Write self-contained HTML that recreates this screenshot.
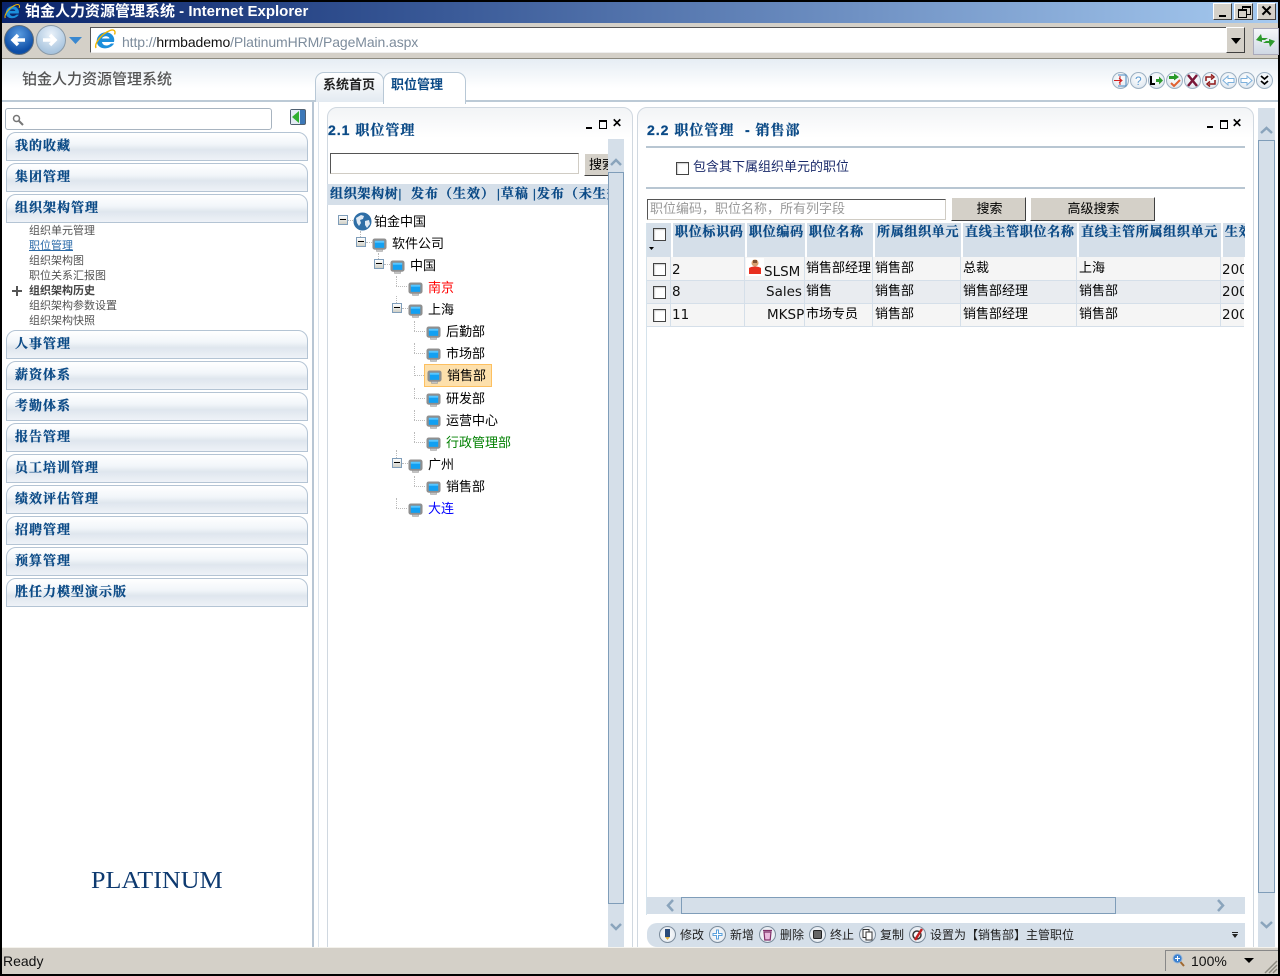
<!DOCTYPE html>
<html lang="zh"><head><meta charset="utf-8"><title>铂金人力资源管理系统</title>
<style>
html,body{margin:0;padding:0;background:#000;width:1280px;height:976px;overflow:hidden}
#w{position:relative;width:1280px;height:976px;overflow:hidden;background:#000;font-family:"Liberation Sans","Noto Sans CJK SC",sans-serif;font-size:13px;color:#000}
#w div,#w span.t,#w svg.a{position:absolute}
.t{white-space:nowrap;line-height:14px;height:14px}
.h{font-family:"Liberation Serif","Noto Serif CJK SC",serif;font-weight:700;color:#0b4a86;font-size:13px;letter-spacing:1px;-webkit-text-stroke:.3px #0b4a86}
.p{font-family:"Liberation Sans","Noto Serif CJK SC",serif;font-size:14px;letter-spacing:1px;line-height:16px;height:16px}
.m{left:15px;font-family:"Liberation Serif","Noto Serif CJK SC",serif;font-weight:700;color:#0b4a86;font-size:13px;letter-spacing:1px;-webkit-text-stroke:.3px #0b4a86}
.b{left:6px;width:300px;height:27px;border:1px solid #b4c4d4;border-top-left-radius:10px;border-top-right-radius:10px;background:linear-gradient(#fff 0,#f2f6fa 40%,#dfe6ee 62%,#eef2f7 100%)}
.s{left:29px;font-size:11px;color:#555;line-height:12px;height:12px}
.btn{background:#d4d0c8;border:1px solid;border-color:#fff #404040 #404040 #fff;text-align:center;font-size:13px;line-height:22px;box-sizing:border-box}
.th{background:#d5dfe9;border-left:2px solid #fff;box-sizing:border-box;top:223px;height:34px}
.cb{background:#fff;border:1px solid #444;width:11px;height:11px;box-shadow:inset 1px 1px 1px #ccc}
.c{width:15px;height:15px;border-radius:50%;border:1px solid #9cb0c2;background:radial-gradient(circle at 50% 35%,#fff,#e4ebf2 70%,#c8d4e0);top:72px}
.c svg{position:absolute;left:0;top:0}
.tb{width:15px;height:15px;border-radius:50%;border:1px solid #7c8c9c;background:radial-gradient(circle,#fff,#e6ebf1 75%,#bcc8d4);top:926px}
.tb svg{position:absolute;left:0;top:0}
.dot{border-left:1px dotted #bbb;width:0}
.dh{border-top:1px dotted #bbb;height:0}
.ex{width:8px;height:8px;border:1px solid #7f9db9;background:linear-gradient(#fff,#cfcfc6)}
.ex::after{content:"";position:absolute;left:1px;top:3px;width:6px;height:1px;background:#000}
.l{font-size:13px}
.v{font-family:"DejaVu Sans",sans-serif;font-size:13.500px;color:#111}
.f{font-size:12px;color:#222}
</style></head><body><div id="w">
<svg width="0" height="0" style="position:absolute"><defs>
<symbol id="pc" viewBox="0 0 16 16"><path d="M3 .5h10a2.500 2.500 0 0 1 2.500 2.500v7a2.500 2.500 0 0 1-2.500 2.500h-1.500v2h-7v-2H3A2.500 2.500 0 0 1 .5 10V3A2.500 2.500 0 0 1 3 .5z" fill="#8f8f8f"/><rect x="3" y="3" width="10" height="7.500" fill="#12a0f2"/><rect x="3" y="3" width="10" height="2" fill="#58c6ff"/><rect x="5" y="12.500" width="6" height="1.500" fill="#c4c4c4"/></symbol>
<symbol id="ie" viewBox="0 0 24 24"><path d="M21 14H9c.3 3.500 5.500 5 9 1.500h3C18 21.500 6 22.500 4 15 2.500 8 9 3 15 4.500 20 6 22 10 21 14zM9 10.500h7.500c-.5-3-6.500-3-7.500 0z" fill="#1c8fdc"/><path d="M3 20C1 16 8 6 17 2.500c4-1.500 6 .5 4.500 4" fill="none" stroke="#f0b400" stroke-width="1.400"/></symbol>
</defs></svg>

<!-- title bar -->
<div style="left:2px;top:2px;width:1276px;height:21px;background:linear-gradient(90deg,#0a246a 0,#3a5a98 35%,#a6caf0 100%)"></div>
<svg class="a" style="left:3px;top:2px" width="18" height="20"><use href="#ie" width="18" height="20"/></svg>
<span class="t" style="left:25px;top:4px;color:#fff;font-weight:700;font-size:15px;line-height:16px;height:16px">铂金人力资源管理系统 - Internet Explorer</span>
<div class="btn" style="left:1213px;top:3px;width:19px;height:17px"><div style="left:5px;top:11px;width:7px;height:2px;background:#000"></div></div>
<div class="btn" style="left:1234px;top:3px;width:19px;height:17px"><div style="left:7px;top:2px;width:7px;height:6px;border:1px solid #000;border-top-width:2px"></div><div style="left:3px;top:5px;width:7px;height:6px;border:1px solid #000;border-top-width:2px;background:#d4d0c8"></div></div>
<div class="btn" style="left:1257px;top:3px;width:19px;height:17px;font-weight:700;line-height:15px;font-size:15px">✕</div>

<!-- toolbar -->
<div style="left:2px;top:23px;width:1276px;height:36px;background:#d4d0c8"></div>
<div style="left:2px;top:58px;width:1276px;height:1px;background:#8c8a80"></div>
<div style="left:4px;top:25px;width:28px;height:28px;border-radius:50%;background:radial-gradient(circle at 50% 30%,#5a9ce0,#0e4ea6 70%);border:1px solid #5b6b7b"></div>
<svg class="a" style="left:8px;top:30px" width="20" height="20"><path d="M17 10H6M10 5l-5 5 5 5" stroke="#fff" stroke-width="3.500" fill="none"/></svg>
<div style="left:36px;top:25px;width:28px;height:28px;border-radius:50%;background:radial-gradient(circle at 50% 30%,#eaf2fa,#a8c4de 75%);border:1px solid #8a9aa8"></div>
<svg class="a" style="left:40px;top:30px" width="20" height="20"><path d="M3 10h11M10 5l5 5-5 5" stroke="#fff" stroke-width="3.500" fill="none"/></svg>
<svg class="a" style="left:69px;top:37px" width="13" height="7"><path d="M0 0h13L6.500 7z" fill="#3a88d0"/></svg>
<div style="left:90px;top:27px;width:1154px;height:26px;background:#fff;border:1px solid;border-color:#555 #eee #eee #555;box-sizing:border-box"></div>
<svg class="a" style="left:93px;top:28px" width="24" height="24"><use href="#ie" width="24" height="24"/></svg>
<span class="t" style="left:122px;top:35px;color:#7d8c9c;font-size:14px;line-height:15px;height:15px;letter-spacing:-.1px">http://<span style="color:#111">hrmbademo</span>/PlatinumHRM/PageMain.aspx</span>
<div class="btn" style="left:1226px;top:27px;width:19px;height:26px"></div>
<svg class="a" style="left:1231px;top:38px" width="10" height="6"><path d="M0 0h10L5 6z"/></svg>
<div style="left:1253px;top:28px;width:24px;height:25px;background:linear-gradient(#f5f7fa,#cfd8e4);border:1px solid #aab"></div>
<svg class="a" style="left:1255px;top:32px" width="21" height="17"><path d="M1 8l5-6 1 4h6l-3 2H7v2zM20 9l-5 6-1-4H8l3-2h3V7z" fill="#2e9a2e"/></svg>

<!-- page -->
<div style="left:2px;top:59px;width:1276px;height:888px;background:#fff"></div>
<div style="left:2px;top:59px;width:1276px;height:42px;background:linear-gradient(#e6edf4,#fff 70%)"></div>
<div style="left:2px;top:100px;width:1276px;height:2px;background:#bccad6"></div>
<span class="t" style="left:22px;top:72px;font-size:15px;color:#555;line-height:16px;height:16px;font-weight:500">铂金人力资源管理系统</span>

<div style="left:315px;top:72px;width:67px;height:29px;border:1px solid #b8c8d6;border-bottom:0;border-radius:9px 9px 0 0;background:linear-gradient(#fff,#e3eaf1)"></div>
<span class="t" style="left:323px;top:78px;font-weight:700;color:#222">系统首页</span>
<div style="left:383px;top:72px;width:81px;height:31px;border:1px solid #b8c8d6;border-bottom:0;border-radius:9px 9px 0 0;background:#fff"></div>
<span class="t" style="left:391px;top:78px;color:#0b4a86;font-weight:700">职位管理</span>

<!-- top-right round buttons -->
<div class="c" style="left:1112px"><svg width="15" height="15"><path d="M5 2h8v11H5" fill="none" stroke="#4a88c0"/><path d="M1 7.500h7M6 5l3 2.500-3 2.500M7 3v9" stroke="#d02020" fill="none"/></svg></div>
<div class="c" style="left:1130px"><svg width="15" height="15"><text x="4" y="12" font-size="12" fill="#5c9ad0" font-family="Liberation Sans">?</text></svg></div>
<div class="c" style="left:1148px"><svg width="15" height="15"><path d="M2 3v8h4" stroke="#000" stroke-width="2" fill="none"/><path d="M7 6h3V3.500L14 7.500 10 11.500V9H7z" fill="#2e9a2e"/></svg></div>
<div class="c" style="left:1166px"><svg width="15" height="15"><path d="M2 3h5V0.500L12 4 7 7.500V6H2z" fill="#2a9a2a"/><path d="M4 10l3 3 6-6" stroke="#e06030" stroke-width="2" fill="none"/></svg></div>
<div class="c" style="left:1184px"><svg width="15" height="15"><path d="M3 2l9 11M12 2L3 13" stroke="#7a1838" stroke-width="2.500"/></svg></div>
<div class="c" style="left:1202px"><svg width="15" height="15"><path d="M3 8V4h6M8 1.500 11 4 8 6.500M12 7v4H6M7 8.500 4 11l3 2.500" stroke="#901818" stroke-width="1.500" fill="none"/></svg></div>
<div class="c" style="left:1220px"><svg width="15" height="15"><path d="M2 7.500 7 3v2.500h6v4H7V12z" fill="#fff" stroke="#7cb0dc"/></svg></div>
<div class="c" style="left:1238px"><svg width="15" height="15"><path d="M13 7.500 8 3v2.500H2v4h6V12z" fill="#fff" stroke="#7cb0dc"/></svg></div>
<div class="c" style="left:1256px"><svg width="15" height="15"><path d="M4 3l3.500 3L11 3M4 8l3.500 3L11 8" stroke="#000" stroke-width="1.800" fill="none"/></svg></div>

<!-- sidebar -->
<div style="left:5px;top:108px;width:265px;height:20px;border:1px solid #a8b4c0;border-radius:3px;background:#fff"></div>
<svg class="a" style="left:12px;top:114px" width="12" height="12"><circle cx="4.500" cy="4.500" r="3" fill="none" stroke="#777" stroke-width="1.500"/><path d="M7 7l4 4" stroke="#777" stroke-width="2"/></svg>
<div style="left:290px;top:109px;width:14px;height:14px;border:1px solid #506070;border-radius:2px;background:#3c78b8"></div>
<svg class="a" style="left:291px;top:110px" width="9" height="14"><rect width="9" height="14" fill="#e4ecf4"/><path d="M1 7l7-6v12z" fill="#30b030"/></svg>
<div style="left:312px;top:102px;width:2px;height:845px;background:#b8c6d4"></div>
<div style="left:318px;top:102px;width:1px;height:845px;background:#dce4ec"></div>

<div class="b" style="top:132px"></div><span class="t m" style="top:139px">我的收藏</span>
<div class="b" style="top:163px"></div><span class="t m" style="top:170px">集团管理</span>
<div class="b" style="top:194px"></div><span class="t m" style="top:201px">组织架构管理</span>
<span class="t s" style="top:225px">组织单元管理</span>
<span class="t s" style="top:240px;color:#2a6aa8;text-decoration:underline">职位管理</span>
<span class="t s" style="top:255px">组织架构图</span>
<span class="t s" style="top:270px">职位关系汇报图</span>
<span class="t s" style="top:285px;font-weight:700;color:#444">组织架构历史</span>
<span class="t s" style="top:300px">组织架构参数设置</span>
<span class="t s" style="top:315px">组织架构快照</span>
<div style="left:12px;top:290px;width:10px;height:2px;background:#555"></div>
<div style="left:16px;top:286px;width:2px;height:10px;background:#555"></div>
<div class="b" style="top:330px"></div><span class="t m" style="top:337px">人事管理</span>
<div class="b" style="top:361px"></div><span class="t m" style="top:368px">薪资体系</span>
<div class="b" style="top:392px"></div><span class="t m" style="top:399px">考勤体系</span>
<div class="b" style="top:423px"></div><span class="t m" style="top:430px">报告管理</span>
<div class="b" style="top:454px"></div><span class="t m" style="top:461px">员工培训管理</span>
<div class="b" style="top:485px"></div><span class="t m" style="top:492px">绩效评估管理</span>
<div class="b" style="top:516px"></div><span class="t m" style="top:523px">招聘管理</span>
<div class="b" style="top:547px"></div><span class="t m" style="top:554px">预算管理</span>
<div class="b" style="top:578px"></div><span class="t m" style="top:585px">胜任力模型演示版</span>
<span class="t" style="left:91px;top:868px;font-family:'Liberation Serif',serif;font-size:24px;line-height:26px;height:26px;color:#0e3a70;transform:scaleX(1.085);transform-origin:left">PLATINUM</span>

<!-- middle panel -->
<div style="left:327px;top:107px;width:304px;height:850px;border:1px solid #d0d8e0;border-radius:10px 10px 0 0;background:linear-gradient(#f2f4f6,#fff 30px)"></div>
<span class="t h p" style="left:328px;top:122px">2.1 职位管理</span>
<div style="left:586px;top:127px;width:6px;height:2px;background:#000"></div>
<div style="left:599px;top:120px;width:6px;height:6px;border:1px solid #000;border-top-width:2px"></div>
<span class="t" style="left:612px;top:116px;font-weight:700;font-size:12px">✕</span>
<div style="left:330px;top:153px;width:249px;height:21px;box-sizing:border-box;background:#fff;border:1px solid;border-color:#555 #d0ccc4 #d0ccc4 #555"></div>
<div class="btn" style="left:584px;top:153px;width:40px;height:23px;text-align:left;padding-left:4px;overflow:hidden">搜索</div>
<div style="left:327px;top:184px;width:281px;height:21px;background:#d5dfe9"></div>
<span class="t h" style="left:330px;top:187px;letter-spacing:.7px">组织架构树|</span>
<span class="t h" style="left:411px;top:187px">发布（生效）</span>
<span class="t h" style="left:497px;top:187px">|草稿</span>
<span class="t h" style="left:533px;top:187px;width:75px;overflow:hidden">|发布（未生效）</span>

<div style="left:608px;top:139px;width:16px;height:808px;background:#d5dfe9"></div>
<div style="left:608px;top:172px;width:14px;height:730px;border:1px solid #7f9db9;background:#d5dfe9"></div>
<svg class="a" style="left:610px;top:158px" width="12" height="8"><path d="M1 7l5-5 5 5" fill="none" stroke="#8aa4bc" stroke-width="2.500"/></svg>
<svg class="a" style="left:610px;top:923px" width="12" height="8"><path d="M1 1l5 5 5-5" fill="none" stroke="#8aa4bc" stroke-width="2.500"/></svg>

<!-- tree lines -->
<div class="dot" style="left:360px;top:231px;height:6px"></div>
<div class="dot" style="left:378px;top:253px;height:6px"></div>
<div class="dot" style="left:396px;top:276px;height:10px"></div>
<div class="dot" style="left:396px;top:296px;height:7px"></div>
<div class="dot" style="left:396px;top:450px;height:8px"></div>
<div class="dot" style="left:396px;top:498px;height:10px"></div>
<div class="dot" style="left:414px;top:321px;height:10px"></div>
<div class="dot" style="left:414px;top:343px;height:10px"></div>
<div class="dot" style="left:414px;top:366px;height:10px"></div>
<div class="dot" style="left:414px;top:388px;height:10px"></div>
<div class="dot" style="left:414px;top:410px;height:10px"></div>
<div class="dot" style="left:414px;top:432px;height:10px"></div>
<div class="dot" style="left:414px;top:476px;height:10px"></div>
<div class="dh" style="left:348px;top:220px;width:5px"></div>
<div class="dh" style="left:366px;top:242px;width:6px"></div>
<div class="dh" style="left:384px;top:264px;width:6px"></div>
<div class="dh" style="left:402px;top:308px;width:6px"></div>
<div class="dh" style="left:402px;top:463px;width:6px"></div>
<div class="dh" style="left:396px;top:286px;width:11px"></div>
<div class="dh" style="left:414px;top:331px;width:11px"></div>
<div class="dh" style="left:414px;top:353px;width:11px"></div>
<div class="dh" style="left:414px;top:375px;width:10px"></div>
<div class="dh" style="left:414px;top:398px;width:11px"></div>
<div class="dh" style="left:414px;top:420px;width:11px"></div>
<div class="dh" style="left:414px;top:442px;width:11px"></div>
<div class="dh" style="left:414px;top:486px;width:11px"></div>
<div class="dh" style="left:396px;top:508px;width:11px"></div>
<div class="ex" style="left:338px;top:215px"></div>
<div class="ex" style="left:356px;top:237px"></div>
<div class="ex" style="left:374px;top:259px"></div>
<div class="ex" style="left:392px;top:303px"></div>
<div class="ex" style="left:392px;top:458px"></div>

<svg class="a" style="left:353px;top:212px" width="19" height="19"><circle cx="9.500" cy="9.500" r="9" fill="#2e6ea6"/><path d="M3 6l5-3 3 1-1 3-3 1 1 3-2 3-2-3zM12 9l4-1 1 4-3 4-2-3z" fill="#dfe9f3"/></svg>
<svg class="a" style="left:372px;top:238px" width="15" height="15"><use href="#pc"/></svg>
<svg class="a" style="left:390px;top:260px" width="15" height="15"><use href="#pc"/></svg>
<svg class="a" style="left:408px;top:282px" width="15" height="15"><use href="#pc"/></svg>
<svg class="a" style="left:408px;top:304px" width="15" height="15"><use href="#pc"/></svg>
<svg class="a" style="left:426px;top:326px" width="15" height="15"><use href="#pc"/></svg>
<svg class="a" style="left:426px;top:348px" width="15" height="15"><use href="#pc"/></svg>
<div style="left:424px;top:364px;width:66px;height:21px;background:#fde0ac;border:1px solid #fdc060"></div>
<svg class="a" style="left:427px;top:370px" width="15" height="15"><use href="#pc"/></svg>
<svg class="a" style="left:426px;top:393px" width="15" height="15"><use href="#pc"/></svg>
<svg class="a" style="left:426px;top:415px" width="15" height="15"><use href="#pc"/></svg>
<svg class="a" style="left:426px;top:437px" width="15" height="15"><use href="#pc"/></svg>
<svg class="a" style="left:408px;top:459px" width="15" height="15"><use href="#pc"/></svg>
<svg class="a" style="left:426px;top:481px" width="15" height="15"><use href="#pc"/></svg>
<svg class="a" style="left:408px;top:503px" width="15" height="15"><use href="#pc"/></svg>

<span class="t l" style="left:374px;top:215px">铂金中国</span>
<span class="t l" style="left:392px;top:237px">软件公司</span>
<span class="t l" style="left:410px;top:259px">中国</span>
<span class="t l" style="left:428px;top:281px;color:#f00">南京</span>
<span class="t l" style="left:428px;top:303px">上海</span>
<span class="t l" style="left:446px;top:325px">后勤部</span>
<span class="t l" style="left:446px;top:347px">市场部</span>
<span class="t l" style="left:447px;top:369px">销售部</span>
<span class="t l" style="left:446px;top:392px">研发部</span>
<span class="t l" style="left:446px;top:414px">运营中心</span>
<span class="t l" style="left:446px;top:436px;color:#008000">行政管理部</span>
<span class="t l" style="left:428px;top:458px">广州</span>
<span class="t l" style="left:446px;top:480px">销售部</span>
<span class="t l" style="left:428px;top:502px;color:#00f">大连</span>

<!-- right panel -->
<div style="left:637px;top:107px;width:615px;height:850px;border:1px solid #d0d8e0;border-radius:10px 10px 0 0;background:linear-gradient(#f2f4f6,#fff 30px)"></div>
<span class="t h p" style="left:647px;top:122px">2.2 职位管理</span>
<span class="t h p" style="left:745px;top:122px">- 销售部</span>
<div style="left:1207px;top:126px;width:6px;height:2px;background:#000"></div>
<div style="left:1220px;top:120px;width:6px;height:6px;border:1px solid #000;border-top-width:2px"></div>
<span class="t" style="left:1232px;top:116px;font-weight:700;font-size:12px">✕</span>
<div style="left:646px;top:146px;width:599px;height:2px;background:#b8c6d2"></div>
<div class="cb" style="left:676px;top:162px"></div>
<span class="t" style="left:693px;top:160px;color:#1a2a6a">包含其下属组织单元的职位</span>
<div style="left:646px;top:187px;width:599px;height:2px;background:#b8c6d2"></div>
<div style="left:647px;top:199px;width:299px;height:21px;box-sizing:border-box;background:#fff;border:1px solid;border-color:#555 #d0ccc4 #d0ccc4 #555"></div>
<span class="t" style="left:650px;top:202px;color:#999">职位编码，职位名称，所有列字段</span>
<div class="btn" style="left:951px;top:197px;width:75px;height:24px;padding-left:2px">搜索</div>
<div class="btn" style="left:1030px;top:197px;width:125px;height:24px;padding-left:2px">高级搜索</div>

<div style="left:647px;top:223px;width:598px;height:34px;background:#d5dfe9"></div>
<div class="th" style="left:671px;width:74px"></div>
<div class="th" style="left:745px;width:60px"></div>
<div class="th" style="left:805px;width:68px"></div>
<div class="th" style="left:873px;width:88px"></div>
<div class="th" style="left:961px;width:116px"></div>
<div class="th" style="left:1077px;width:144px"></div>
<div class="th" style="left:1221px;width:24px"></div>
<div class="cb" style="left:653px;top:228px"></div>
<svg class="a" style="left:649px;top:247px" width="5" height="3"><path d="M0 0h5L2.500 3z"/></svg>
<span class="t h" style="left:675px;top:225px;letter-spacing:.7px">职位标识码</span>
<span class="t h" style="left:749px;top:225px;letter-spacing:.7px">职位编码</span>
<span class="t h" style="left:809px;top:225px;letter-spacing:.7px">职位名称</span>
<span class="t h" style="left:877px;top:225px;letter-spacing:.7px">所属组织单元</span>
<span class="t h" style="left:965px;top:225px;letter-spacing:.7px">直线主管职位名称</span>
<span class="t h" style="left:1081px;top:225px;letter-spacing:.7px">直线主管所属组织单元</span>
<span class="t h" style="left:1225px;top:225px;width:20px;overflow:hidden;letter-spacing:.7px">生效日期</span>

<div style="left:647px;top:257px;width:597px;height:23px;background:#f5f5f5"></div>
<div style="left:647px;top:280px;width:597px;height:1px;background:#d5dfe9"></div>
<div style="left:647px;top:281px;width:597px;height:22px;background:#e9ecf0"></div>
<div style="left:647px;top:303px;width:597px;height:1px;background:#d5dfe9"></div>
<div style="left:647px;top:304px;width:597px;height:22px;background:#f5f5f5"></div>
<div style="left:647px;top:326px;width:597px;height:1px;background:#d5dfe9"></div>
<div style="left:670px;top:257px;width:1px;height:70px;background:#d5dfe9"></div>
<div style="left:744px;top:257px;width:1px;height:70px;background:#d5dfe9"></div>
<div style="left:804px;top:257px;width:1px;height:70px;background:#d5dfe9"></div>
<div style="left:872px;top:257px;width:1px;height:70px;background:#d5dfe9"></div>
<div style="left:960px;top:257px;width:1px;height:70px;background:#d5dfe9"></div>
<div style="left:1076px;top:257px;width:1px;height:70px;background:#d5dfe9"></div>
<div style="left:1220px;top:257px;width:1px;height:70px;background:#d5dfe9"></div>
<div style="left:646px;top:223px;width:1px;height:692px;background:#d5e3ec"></div>

<div class="cb" style="left:653px;top:263px"></div>
<div class="cb" style="left:653px;top:286px"></div>
<div class="cb" style="left:653px;top:309px"></div>
<span class="t v" style="left:672px;top:263px">2</span>
<span class="t v" style="left:672px;top:285px">8</span>
<span class="t v" style="left:672px;top:308px">11</span>
<div style="left:746px;top:258px;width:18px;height:18px;background:#fff"></div>
<svg class="a" style="left:747px;top:258px" width="16" height="18"><circle cx="8" cy="5" r="3.500" fill="#d8a070"/><path d="M6 2h4v3H6z" fill="#805030"/><path d="M2 10c3-2 9-2 12 0v6H2z" fill="#e83020"/></svg>
<span class="t v" style="left:764px;top:265px">SLSM</span>
<span class="t v" style="left:766px;top:285px">Sales</span>
<span class="t v" style="left:767px;top:308px">MKSP</span>
<span class="t" style="left:806px;top:261px">销售部经理</span>
<span class="t" style="left:806px;top:284px">销售</span>
<span class="t" style="left:806px;top:307px">市场专员</span>
<span class="t" style="left:875px;top:261px">销售部</span>
<span class="t" style="left:875px;top:284px">销售部</span>
<span class="t" style="left:875px;top:307px">销售部</span>
<span class="t" style="left:963px;top:261px">总裁</span>
<span class="t" style="left:963px;top:284px">销售部经理</span>
<span class="t" style="left:963px;top:307px">销售部经理</span>
<span class="t" style="left:1079px;top:261px">上海</span>
<span class="t" style="left:1079px;top:284px">销售部</span>
<span class="t" style="left:1079px;top:307px">销售部</span>
<span class="t v" style="left:1222px;top:263px;width:22px;overflow:hidden">2009</span>
<span class="t v" style="left:1222px;top:285px;width:22px;overflow:hidden">2009</span>
<span class="t v" style="left:1222px;top:308px;width:22px;overflow:hidden">2009</span>

<!-- horizontal scrollbar -->
<div style="left:647px;top:897px;width:598px;height:17px;background:#d5dfe9"></div>
<div style="left:681px;top:897px;width:433px;height:15px;border:1px solid #7f9db9;background:#d5dfe9"></div>
<svg class="a" style="left:665px;top:899px" width="10" height="13"><path d="M8 1L3 6.500 8 12" fill="none" stroke="#8aa4bc" stroke-width="2.500"/></svg>
<svg class="a" style="left:1216px;top:899px" width="10" height="13"><path d="M2 1l5 5.500L2 12" fill="none" stroke="#8aa4bc" stroke-width="2.500"/></svg>

<!-- bottom toolbar -->
<div style="left:647px;top:923px;width:598px;height:24px;background:#d5dfe9;border-radius:10px 0 0 10px"></div>
<div class="tb" style="left:659px"><svg width="15" height="15"><rect x="5" y="2" width="5" height="8" fill="#2a4a78"/><path d="M5 10h5l-2.500 3z" fill="#e0b040"/></svg></div>
<span class="t f" style="left:680px;top:928px">修改</span>
<div class="tb" style="left:709px"><svg width="15" height="15"><path d="M7.500 2.500v10M2.500 7.500h10" stroke="#5aa0dc" stroke-width="3"/><path d="M7.500 3.500v8M3.500 7.500h8" stroke="#fff" stroke-width="1"/></svg></div>
<span class="t f" style="left:730px;top:928px">新增</span>
<div class="tb" style="left:759px"><svg width="15" height="15"><path d="M4 5h7l-.8 8H4.800zM3 3.500h9" stroke="#80306a" fill="#e8b8dc" stroke-width="1.200"/></svg></div>
<span class="t f" style="left:780px;top:928px">删除</span>
<div class="tb" style="left:809px"><svg width="15" height="15"><rect x="3.500" y="3.500" width="8" height="8" rx="1" fill="#666" stroke="#222"/></svg></div>
<span class="t f" style="left:830px;top:928px">终止</span>
<div class="tb" style="left:859px"><svg width="15" height="15"><rect x="3" y="2.500" width="6" height="8" fill="#fff" stroke="#333"/><rect x="6" y="5" width="6" height="8" fill="#fff" stroke="#333"/></svg></div>
<span class="t f" style="left:880px;top:928px">复制</span>
<div class="tb" style="left:909px"><svg width="15" height="15"><circle cx="7" cy="8" r="4" fill="none" stroke="#333" stroke-width="1.500"/><path d="M12 2L5 13" stroke="#c02020" stroke-width="2.500"/></svg></div>
<span class="t f" style="left:930px;top:928px">设置为【销售部】主管职位</span>
<svg class="a" style="left:1232px;top:932px" width="6" height="7"><path d="M0 0h6v1H0zM0 2h6L3 6z" fill="#222"/></svg>

<!-- right scrollbar -->
<div style="left:1258px;top:108px;width:17px;height:839px;background:#d5dfe9"></div>
<div style="left:1258px;top:140px;width:15px;height:751px;border:1px solid #7f9db9;background:#d5dfe9"></div>
<svg class="a" style="left:1260px;top:126px" width="13" height="8"><path d="M1 7l5.500-5L12 7" fill="none" stroke="#8aa4bc" stroke-width="2.500"/></svg>
<svg class="a" style="left:1260px;top:921px" width="13" height="8"><path d="M1 1l5.500 5L12 1" fill="none" stroke="#8aa4bc" stroke-width="2.500"/></svg>

<!-- status bar -->
<div style="left:2px;top:947px;width:1276px;height:27px;background:#d4d0c8;border-top:1px solid #f4f2ec;box-sizing:border-box"></div>
<span class="t" style="left:3px;top:953px;font-size:14px;line-height:16px;height:16px;color:#111">Ready</span>
<div style="left:1165px;top:950px;width:1px;height:21px;background:#888"></div>
<div style="left:1165px;top:950px;width:113px;height:1px;background:#888"></div>
<svg class="a" style="left:1172px;top:953px" width="13" height="14"><circle cx="5.500" cy="5.500" r="4.500" fill="#3a80d0" stroke="#9ab8d8"/><path d="M3 5.500h5M5.500 3v5" stroke="#fff"/><path d="M8.500 9l3.500 4" stroke="#a06830" stroke-width="2"/></svg>
<span class="t" style="left:1191px;top:953px;font-size:14px;line-height:16px;height:16px;color:#111">100%</span>
<svg class="a" style="left:1244px;top:958px" width="10" height="5"><path d="M0 0h10L5 5z"/></svg>
<svg class="a" style="left:1264px;top:960px" width="14" height="14"><path d="M13 1L1 13M13 5L5 13M13 9l-4 4" stroke="#8c8a80" stroke-width="1.500"/></svg>
</div></body></html>
